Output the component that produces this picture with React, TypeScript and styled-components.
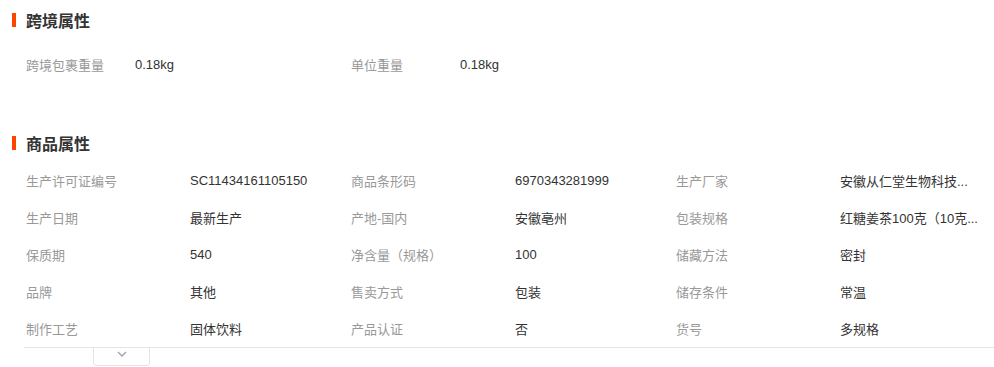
import React from "react";
import styled, { createGlobalStyle } from "styled-components";

const GlobalStyle = createGlobalStyle`
  body {
    margin: 0;
    background: #fff;
    font-family: "Liberation Sans", "Noto Sans CJK SC", sans-serif;
    font-size: 13px;
    color: #333;
  }
`;

const Page = styled.div`
  width: 994px;
  padding-top: 2px;
`;

const Section = styled.section<{ $gap?: number }>`
  margin-bottom: ${(p) => p.$gap || 0}px;
`;

const Title = styled.h3`
  display: flex;
  align-items: center;
  height: 36px;
  margin: 0;
  padding-left: 12px;
  font-size: 16px;
  font-weight: bold;
  color: #333;
  font-family: "Noto Sans CJK SC", sans-serif;
  &::before {
    content: "";
    width: 4px;
    height: 14px;
    margin-right: 10px;
    background: #ff4400;
  }
`;

const Grid = styled.ul<{ $pad?: number; $line?: boolean }>`
  list-style: none;
  margin: 0 0 0 24px;
  padding: ${(p) => p.$pad || 0}px 0 0;
  display: grid;
  grid-template-columns: 325px 325px 1fr;
  border-bottom: ${(p) => (p.$line ? "1px solid #e5e5e5" : "none")};
`;

const Item = styled.li<{ $labelW: number }>`
  display: flex;
  align-items: center;
  height: 37px;
  padding-left: 2px;
  .label {
    width: ${(p) => p.$labelW}px;
    flex: none;
    color: #999;
  }
  .value {
    white-space: nowrap;
    color: #333;
  }
`;

const Toggle = styled.button`
  display: flex;
  align-items: center;
  justify-content: center;
  width: 57px;
  height: 18px;
  margin-left: 93px;
  padding: 0 0 5px;
  background: #fff;
  border: 1px solid #e5e5e5;
  border-top: none;
  border-radius: 0 0 4px 4px;
  cursor: pointer;
`;

type Attr = [string, string];

const cross: Attr[] = [
  ["跨境包裹重量", "0.18kg"],
  ["单位重量", "0.18kg"],
];

const goods: Attr[] = [
  ["生产许可证编号", "SC11434161105150"],
  ["商品条形码", "6970343281999"],
  ["生产厂家", "安徽从仁堂生物科技..."],
  ["生产日期", "最新生产"],
  ["产地-国内", "安徽亳州"],
  ["包装规格", "红糖姜茶100克（10克..."],
  ["保质期", "540"],
  ["净含量（规格）", "100"],
  ["储藏方法", "密封"],
  ["品牌", "其他"],
  ["售卖方式", "包装"],
  ["储存条件", "常温"],
  ["制作工艺", "固体饮料"],
  ["产品认证", "否"],
  ["货号", "多规格"],
];

export default function App() {
  return (
    <Page>
      <GlobalStyle />
      <Section $gap={42}>
        <Title>跨境属性</Title>
        <Grid $pad={8}>
          {cross.map(([k, v]) => (
            <Item key={k} $labelW={109}>
              <span className="label">{k}</span>
              <span className="value">{v}</span>
            </Item>
          ))}
        </Grid>
      </Section>
      <Section>
        <Title>商品属性</Title>
        <Grid $pad={1} $line>
          {goods.map(([k, v]) => (
            <Item key={k} $labelW={164}>
              <span className="label">{k}</span>
              <span className="value">{v}</span>
            </Item>
          ))}
        </Grid>
        <Toggle>
          <svg width="10" height="6" viewBox="0 0 10 6">
            <polyline points="1,1 5,5 9,1" fill="none" stroke="#9aa0b0" strokeWidth="1.3" />
          </svg>
        </Toggle>
      </Section>
    </Page>
  );
}
